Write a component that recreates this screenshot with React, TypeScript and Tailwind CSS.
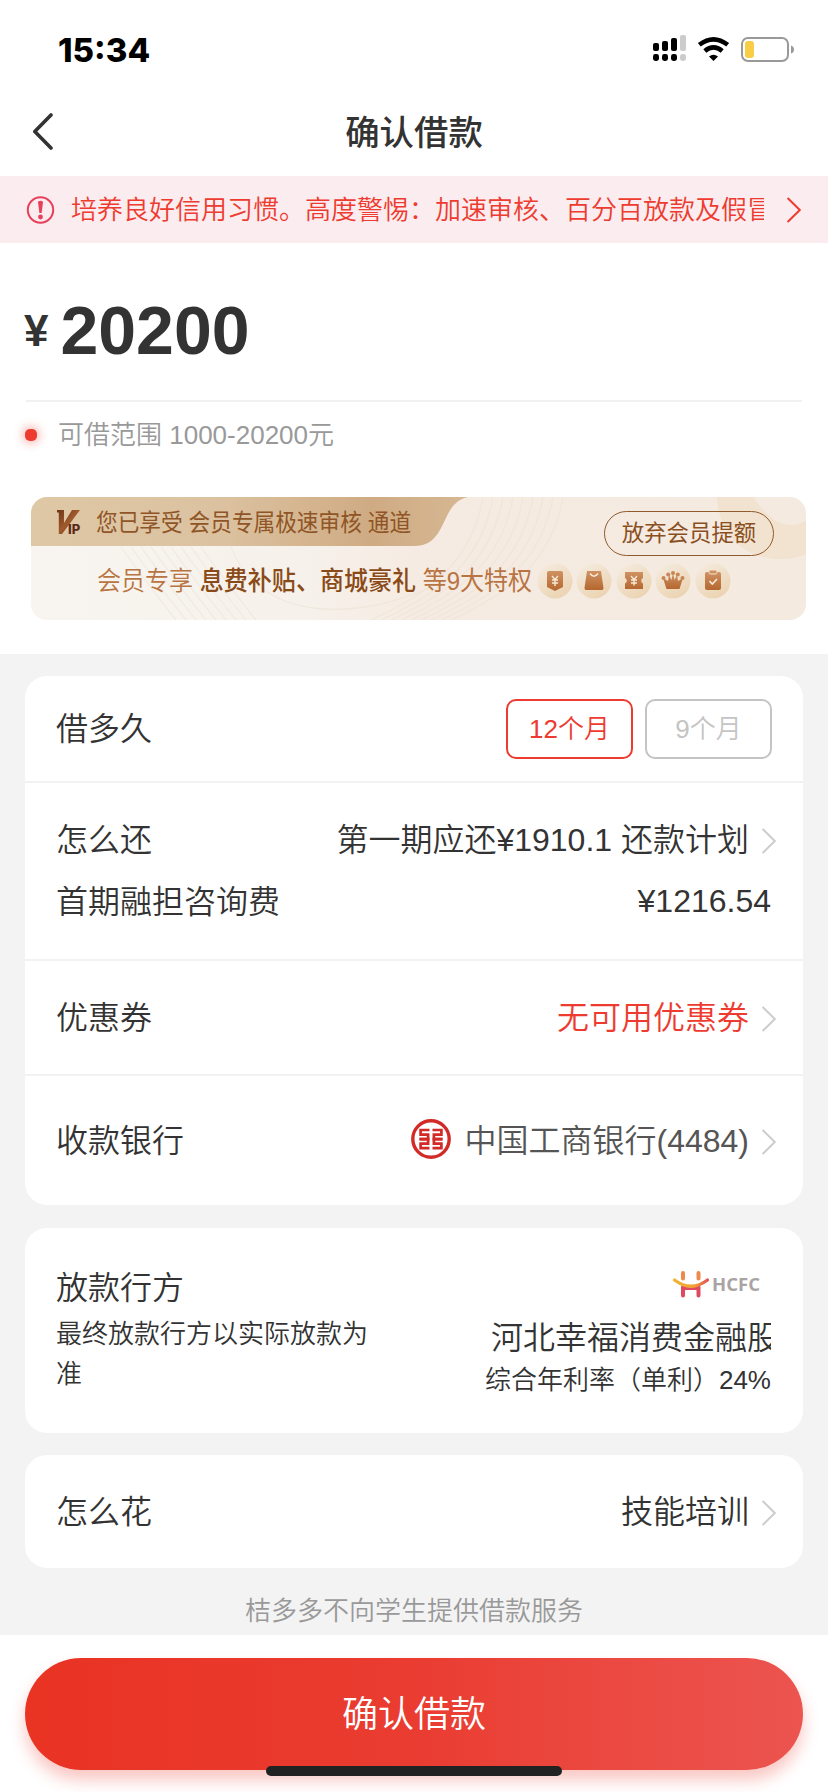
import type { ReactNode } from "react";

function ChevronRight({ className }: { className: string }) {
  return (
    <svg viewBox="0 0 16 28" fill="none" stroke="currentColor" strokeWidth="2" className={className}>
      <path d="M1.6 2 L13.8 14 L1.6 26" />
    </svg>
  );
}

function StatusBar() {
  return (
    <div className="flex h-[88px] items-start justify-between pt-[32px] pl-[58px] pr-[33px]">
      <div className="font-['Inter',sans-serif] text-[33px] leading-[36px] font-extrabold text-black">15:34</div>
      <svg viewBox="0 0 142 28" className="mt-[2px] h-[28px] w-[142px]">
        <g fill="#000">
          <rect x="0" y="9" width="6" height="8" rx="2" />
          <rect x="9" y="7" width="6" height="10" rx="2" />
          <rect x="18" y="4" width="6" height="13" rx="2" />
          <rect x="0" y="20" width="6" height="7" rx="2.4" />
          <rect x="9" y="20" width="6" height="7" rx="2.4" />
          <rect x="18" y="20" width="6" height="7" rx="2.4" />
        </g>
        <g fill="#ccc">
          <rect x="27" y="1" width="6" height="16" rx="2" />
          <rect x="27" y="20" width="6" height="7" rx="2.4" />
        </g>
        <g fill="none" stroke="#000" strokeWidth="4.6">
          <path d="M46.3 10.8 Q60.5 -0.2 74.7 10.8" />
          <path d="M51.8 17 Q60.5 9.8 69.2 17" />
        </g>
        <path d="M56 22.6 Q60.5 19 65 22.6 L60.5 27 Z" fill="#000" />
        <rect x="89" y="4" width="46" height="23" rx="6" fill="none" stroke="#999" strokeWidth="2" />
        <rect x="92" y="7" width="9" height="17" rx="3" fill="#f8ce46" />
        <path d="M138 11.5 Q141 12.5 141 15.5 Q141 18.500 138 19.5 Z" fill="#999" />
      </svg>
    </div>
  );
}

function Header() {
  return (
    <div className="grid h-[88px] grid-cols-[1fr_auto_1fr] items-center pl-[32px]">
      <svg viewBox="0 0 22 38" className="h-[38px] w-[22px]" fill="none" stroke="#333" strokeWidth="3.6" strokeLinecap="round" strokeLinejoin="round">
        <path d="M19 2 L2.800 18.500 L19 35" />
      </svg>
      <h1 className="mt-px pr-[32px] text-[34.400px] leading-[40px] font-medium">确认借款</h1>
      <span />
    </div>
  );
}

function Notice() {
  return (
    <div className="flex h-[67px] items-center bg-[#fbecef] pl-[26px] text-[#ee3b2f]">
      <svg viewBox="0 0 30 30" className="h-[30px] w-[30px] shrink-0">
        <circle cx="14.500" cy="15" r="12.700" fill="none" stroke="#e8405a" strokeWidth="2" />
        <path d="M12 6.800 Q14.500 4.800 17 6.800 L15.600 18 H13.400 Z" fill="#e8405a" />
        <circle cx="14.500" cy="22" r="2.400" fill="#e8405a" />
      </svg>
      <p className="ml-[15px] w-[693px] overflow-hidden text-[26px] leading-[40px] font-[350] whitespace-nowrap">
        培养良好信用习惯。高度警惕：加速审核、百分百放款及假冒
      </p>
      <ChevronRight className="ml-[22px] h-[28px] w-[16px]" />
    </div>
  );
}

function BannerBackground() {
  const waves = Array.from({ length: 9 }, (_, i) => i * 10);
  return (
    <svg viewBox="0 0 775 123" className="absolute inset-0 h-[123px] w-[775px]">
      <defs>
        <linearGradient id="base" x1="0" x2="1">
          <stop offset="0" stopColor="#f8f5f0" />
          <stop offset="0.35" stopColor="#f6f1eb" />
          <stop offset="0.5" stopColor="#f6ebe2" />
          <stop offset="1" stopColor="#f4eae0" />
        </linearGradient>
        <linearGradient id="tab" x1="0" x2="1">
          <stop offset="0" stopColor="#dfc8a6" />
          <stop offset="0.45" stopColor="#dbc19f" />
          <stop offset="0.78" stopColor="#cfab83" />
          <stop offset="1" stopColor="#d6b894" />
        </linearGradient>
      </defs>
      <rect width="775" height="123" fill="url(#base)" />
      <g fill="none" stroke="#eadfce" strokeWidth="1.200" opacity="0.450">
        {waves.map((d) => (
          <path key={d} d={`M${90 + d} 50 Q${115 + d} 85 ${145 + d} 123`} />
        ))}
        {waves.map((d) => (
          <path key={d} d={`M${452 + d} 0 C${440 + d} 70 ${390 + d} 100 ${340 + d} 123`} />
        ))}
        <path d="M200 50 C230 130 340 125 420 80" />
      </g>
      <path d="M686 0 C688 40 715 62 750 62 Q765 62 775 57 V24 C750 36 735 18 722 0 Z" fill="#f0e1cb" opacity="0.8" />
      <path d="M0 0 H437 C408 6 418 49 383 49 H0 Z" fill="url(#tab)" />
    </svg>
  );
}

function PerkIcon({ children }: { children: ReactNode }) {
  return (
    <svg viewBox="0 0 36 36" className="h-[36px] w-[36px] shrink-0">
      <circle cx="18" cy="18" r="17.500" fill="url(#perkDisc)" />
      {children}
    </svg>
  );
}

function Perks() {
  return (
    <div className="flex gap-[3.400px]">
      <svg className="absolute h-0 w-0">
        <defs>
          <linearGradient id="perkDisc" x1="0" y1="0" x2="0.600" y2="1">
            <stop offset="0" stopColor="#f6ede2" />
            <stop offset="1" stopColor="#ebd4b3" />
          </linearGradient>
          <linearGradient id="perkInk" x1="0" y1="0" x2="0" y2="1">
            <stop offset="0" stopColor="#cf9263" />
            <stop offset="1" stopColor="#b5672f" />
          </linearGradient>
        </defs>
      </svg>
      <PerkIcon>
        <path d="M10 10 Q10 8 12 8 H24 Q26 8 26 10 V24 L18 28 L10 24 Z" fill="url(#perkInk)" />
        <path d="M15 13 L18 16.500 L21 13 M18 16.500 V23 M15 17 H21 M15 20 H21" stroke="#f8ead8" strokeWidth="1.400" fill="none" />
      </PerkIcon>
      <PerkIcon>
        <path d="M11 8 H25 L27.500 25 Q27.500 27 26 27 H10 Q8.500 27 8.500 25 Z" fill="url(#perkInk)" />
        <path d="M14 10.500 Q18 16 22 10.500" stroke="#f8ead8" strokeWidth="1.500" fill="none" />
      </PerkIcon>
      <PerkIcon>
        <path d="M9 9 H27 V15 A3 3 0 0 0 27 20.500 V26 H9 V20.500 A3 3 0 0 0 9 15 Z" fill="url(#perkInk)" />
        <path d="M15 13 L18 16.500 L21 13 M18 16.500 V22.500 M15 17 H21 M15 20 H21" stroke="#f8ead8" strokeWidth="1.400" fill="none" />
      </PerkIcon>
      <PerkIcon>
        <path d="M8 15 L13 18 L14 12 L16.500 17 L18 10 L19.500 17 L22 12 L23 18 L28 15 L24.500 26 H11.500 Z" fill="url(#perkInk)" />
        <g fill="#c88655">
          <circle cx="8.500" cy="15" r="2" />
          <circle cx="13.200" cy="11.500" r="2" />
          <circle cx="18" cy="10" r="2" />
          <circle cx="22.800" cy="11.500" r="2" />
          <circle cx="27.500" cy="15" r="2" />
        </g>
      </PerkIcon>
      <PerkIcon>
        <rect x="10" y="9" width="16" height="18" rx="2" fill="url(#perkInk)" />
        <rect x="14" y="7" width="8" height="4" rx="1.500" fill="#cf9263" stroke="#f3e6d4" strokeWidth="1" />
        <path d="M14.500 18 L17.300 21 L22 16" stroke="#f8ead8" strokeWidth="1.600" fill="none" />
      </PerkIcon>
    </div>
  );
}

function VipBanner() {
  return (
    <div className="relative mt-[40px] ml-[31px] h-[123px] w-[775px] overflow-hidden rounded-[16px]">
      <BannerBackground />
      <div className="relative flex h-[49px] items-center">
        <svg viewBox="0 0 26 28" className="ml-[25px] h-[28px] w-[26px] shrink-0">
          <defs>
            <linearGradient id="vip" x1="0" y1="0" x2="1" y2="1">
              <stop offset="0" stopColor="#6d3418" />
              <stop offset="0.500" stopColor="#a05a2c" />
              <stop offset="1" stopColor="#5d2c16" />
            </linearGradient>
          </defs>
          <path d="M1 2 H8 V15 L16 2 H24 L6 26 H2.800 V4.500 H1 Z" fill="url(#vip)" />
          <text x="12" y="26" fill="#5d2c16" className="font-['Inter',sans-serif] text-[13px] font-extrabold">IP</text>
        </svg>
        <p className="mt-[2px] ml-[14px] origin-left scale-x-[0.902] text-[24px] leading-[30px] whitespace-nowrap text-[#8f5526]">
          您已享受 会员专属极速审核 通道
        </p>
      </div>
      <div className="relative flex h-[74px] items-start pt-[17px] pl-[66px]">
        <p className="w-[443px] origin-left scale-x-[0.924] text-[26px] leading-[36px] whitespace-nowrap text-[#b87442]">
          <span className="font-[350]">会员专享 </span>
          <span className="font-medium text-[#8a4a18]">息费补贴、商城豪礼</span>
          <span> 等9大特权</span>
        </p>
        <div className="-ml-[3px]">
          <Perks />
        </div>
      </div>
      <button className="absolute top-[14px] left-[573px] h-[45px] w-[170px] rounded-full border-[1.500px] border-[#8f5a2c] text-[22.400px] leading-[43px] whitespace-nowrap text-[#8a4f1e]">
        放弃会员提额
      </button>
    </div>
  );
}

function BankLogo() {
  return (
    <svg viewBox="0 0 40 40" className="-mt-[3px] h-[40px] w-[40px] shrink-0" fill="none" stroke="#d22b27">
      <circle cx="20" cy="20" r="18.200" strokeWidth="3.400" />
      <g strokeWidth="2.700">
        <path d="M18.500 11 H9.600 V15.700 H17.100 V20.200 H8.500" />
        <path d="M21.500 11 H30.400 V15.700 H22.900 V20.200 H31.500" />
        <path d="M8.500 20.200 H17.100 V24.600 H9.600 V29.200 H18.500" />
        <path d="M31.500 20.200 H22.900 V24.600 H30.400 V29.200 H21.500" />
      </g>
    </svg>
  );
}

function LenderLogo() {
  return (
    <div className="flex items-center">
      <svg viewBox="0 0 38 30" className="h-[30px] w-[38px]" fill="none" strokeLinecap="round">
        <defs>
          <linearGradient id="smile" gradientUnits="userSpaceOnUse" x1="0" y1="0" x2="38" y2="0">
            <stop offset="0" stopColor="#f2b632" />
            <stop offset="0.600" stopColor="#f0a035" />
            <stop offset="1" stopColor="#e2445c" />
          </linearGradient>
        </defs>
        <path d="M11 4 V9.500 M26.500 4 V9.500" stroke="#ee8a4c" strokeWidth="4" />
        <path d="M11 18 V26.500 M26.500 18 V26.500 M11 19 H26" stroke="#e04a60" strokeWidth="4" />
        <path d="M2.500 11 Q19 23.500 35.500 11" stroke="url(#smile)" strokeWidth="3.200" />
      </svg>
      <span className="ml-[2px] font-['Open_Sans',sans-serif] text-[18.500px] leading-[28px] font-bold text-[#aaa3a5]">HCFC</span>
    </div>
  );
}

function Row({ label, className, children }: { label: string; className: string; children: ReactNode }) {
  return (
    <div className={`flex items-center justify-between pl-[31px] ${className}`}>
      <span>{label}</span>
      {children}
    </div>
  );
}

function LoanCard() {
  return (
    <section className="mt-[22px] h-[529px] overflow-hidden rounded-[22px] bg-white text-[32px] leading-[40px] font-[350]">
      <Row label="借多久" className="h-[107px] border-b-2 border-[#f2f2f2] pr-[31px]">
        <div className="flex gap-[12px] text-[26px] leading-[56px]">
          <button className="h-[60px] w-[127px] rounded-[10px] border-2 border-[#ee3b2f] text-[#ee3b2f]">12个月</button>
          <button className="h-[60px] w-[127px] rounded-[10px] border-2 border-[#c4c4c4] text-[#c4c4c4]">9个月</button>
        </div>
      </Row>
      <div className="h-[178px] border-b-2 border-[#f2f2f2] pt-[37px]">
        <Row label="怎么还" className="h-[40px] pr-[26px]">
          <div className="flex items-center">
            <span>第一期应还¥1910.1 还款计划</span>
            <ChevronRight className="mt-px ml-[12px] h-[28px] w-[16px] text-[#ccc]" />
          </div>
        </Row>
        <Row label="首期融担咨询费" className="mt-[22px] h-[40px] pr-[32px]">
          <span className="-mt-[3px]">¥1216.54</span>
        </Row>
      </div>
      <Row label="优惠券" className="h-[115px] border-b-2 border-[#f2f2f2] pr-[26px]">
        <div className="flex items-center text-[#ee3b2f]">
          <span>无可用优惠券</span>
          <ChevronRight className="mt-[3px] ml-[12px] h-[28px] w-[16px] text-[#ccc]" />
        </div>
      </Row>
      <Row label="收款银行" className="h-[129px] pr-[26px]">
        <div className="flex items-center text-[#555]">
          <BankLogo />
          <span className="ml-[13px]">中国工商银行(4484)</span>
          <ChevronRight className="mt-[2px] ml-[12px] h-[28px] w-[16px] text-[#ccc]" />
        </div>
      </Row>
    </section>
  );
}

function LenderCard() {
  return (
    <section className="mt-[23px] flex h-[205px] justify-between rounded-[22px] bg-white pr-[32px] pl-[31px] font-[350]">
      <div className="w-[326px] pt-[40px]">
        <div className="text-[32px] leading-[40px]">放款行方</div>
        <div className="mt-[7px] text-[26px] leading-[39.500px]">最终放款行方以实际放款为准</div>
      </div>
      <div className="flex flex-col items-end pt-[41px]">
        <div className="pr-[11px]">
          <LenderLogo />
        </div>
        <div className="mt-[18px] w-[280px] overflow-hidden text-[32px] leading-[42px] whitespace-nowrap">河北幸福消费金融股</div>
        <div className="mt-px text-[26px] leading-[40px] whitespace-nowrap">综合年利率（单利）24%</div>
      </div>
    </section>
  );
}

export default function App() {
  return (
    <div className="flex h-[1792px] w-[828px] flex-col overflow-hidden bg-white font-['Liberation_Sans','Noto_Sans_CJK_SC',sans-serif] text-[#333]">
      <StatusBar />
      <Header />
      <Notice />
      <div className="mx-[26px] flex h-[159px] items-baseline border-b-2 border-[#f1f1f1] pt-[47px] font-bold">
        <span className="-ml-[2px] -translate-y-[8px] text-[44px] leading-[80px]">¥</span>
        <span className="ml-[12px] text-[68px] leading-[80px]">20200</span>
      </div>
      <div className="mt-[13px] flex h-[40px] items-center pl-[25px] text-[26px] leading-[40px] font-[350] text-[#999]">
        <span className="h-[12px] w-[12px] rounded-[5px] bg-[#ee3b2f] shadow-[0_0_8px_3px_rgba(238,59,47,0.3)]" />
        <span className="ml-[21px]">可借范围 1000-20200元</span>
      </div>
      <div className="h-[199px] pt-[2px]">
        <VipBanner />
      </div>
      <main className="flex h-[980.500px] shrink-0 flex-col bg-[#f3f3f3] px-[25px]">
        <LoanCard />
        <LenderCard />
        <section className="mt-[22px] h-[113px] rounded-[22px] bg-white text-[32px] leading-[40px] font-[350]">
          <Row label="怎么花" className="h-[113px] pr-[26px]">
            <div className="flex items-center">
              <span>技能培训</span>
              <ChevronRight className="mt-[3px] ml-[12px] h-[28px] w-[16px] text-[#ccc]" />
            </div>
          </Row>
        </section>
        <p className="mt-[23px] text-center text-[26px] leading-[40px] font-[350] text-[#999]">桔多多不向学生提供借款服务</p>
      </main>
      <footer className="relative flex grow justify-center pt-[23.500px]">
        <button className="h-[112px] w-[778px] rounded-full bg-linear-to-r from-[#e93323] via-[#ea3c31] to-[#ec544f] text-[36px] leading-[114px] font-[350] text-white shadow-[0_10px_16px_rgba(233,51,35,0.28)]">
          确认借款
        </button>
        <div className="absolute bottom-[16px] left-[266px] h-[10px] w-[296px] rounded-full bg-[#222]" />
      </footer>
    </div>
  );
}
